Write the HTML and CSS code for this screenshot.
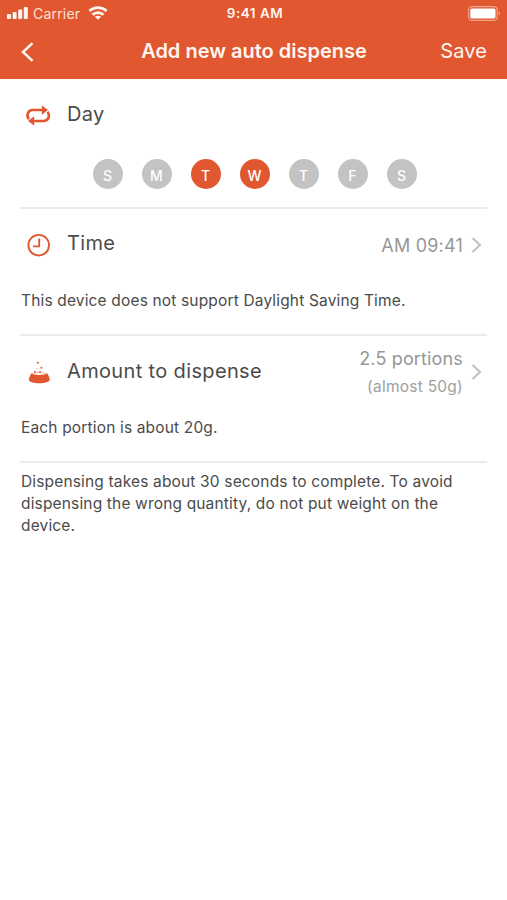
FILE: index.html
```html
<!DOCTYPE html>
<html lang="en">
<head>
<meta charset="utf-8">
<title>Add new auto dispense</title>
<link rel="stylesheet" href="styles.css">
</head>
<body>
<header class="header">
  <div class="status">
    <div class="status-left">
      <svg class="signal" width="22" height="14" viewBox="0 0 22 14"><g fill="currentColor"><rect x="0" y="8" width="4" height="5" rx="1"/><rect x="5.6" y="6" width="4" height="7" rx="1"/><rect x="11.2" y="3.6" width="4" height="9.4" rx="1"/><rect x="16.8" y="1" width="4" height="12" rx="1"/></g></svg>
      <span class="carrier">Carrier</span>
      <svg class="wifi" width="20" height="14" viewBox="0 0 20 14"><g fill="none" stroke="currentColor" stroke-width="2.7"><path d="M1.4 5C6.4.6 13.6.6 18.6 5"/><path d="M4.5 8.8c3.2-2.9 7.8-2.9 11 0"/></g><path fill="currentColor" d="M6.9 10.8c1.8-1.4 4.4-1.4 6.2 0L10 13.7z"/></svg>
    </div>
    <span class="clock">9:41 AM</span>
    <svg class="battery" width="33" height="16" viewBox="0 0 33 16"><rect x=".6" y=".6" width="28.6" height="13.8" rx="3.5" fill="none" stroke="#f0a68e" stroke-width="1.1"/><rect x="2.3" y="2.4" width="25.2" height="10.2" rx="1.7" fill="#fff"/><path d="M30.6 5.5c1.8.6 1.8 3.4 0 4z" fill="#f0a68e"/></svg>
  </div>
  <nav class="nav">
    <svg class="back" width="14" height="20" viewBox="0 0 14 20"><path d="M11.5 1.2 2 10l9.5 8.8" fill="none" stroke="currentColor" stroke-width="2.5"/></svg>
    <h1 class="title">Add new auto dispense</h1>
    <span class="save">Save</span>
  </nav>
</header>
<main class="content">
  <section class="section">
    <div class="row">
      <svg class="icon" width="26" height="26" viewBox="0 0 26 26"><g fill="none" stroke="currentColor" stroke-width="2.7"><path d="M3.9 17.2C1 13.4 2.8 8 7.8 8H18"/><path d="M22.5 9.8C25.4 13.6 23.6 19 18.6 19H8"/></g><path fill="currentColor" d="m16.8 3.4 6.2 4.6-6.2 4.8zM9.2 14.2v9.4L3 19z"/></svg>
      <h2 class="label">Day</h2>
    </div>
    <div class="days">
      <span class="day">S</span><span class="day">M</span><span class="day on">T</span><span class="day on">W</span><span class="day">T</span><span class="day">F</span><span class="day">S</span>
    </div>
  </section>
  <section class="section">
    <div class="row">
      <svg class="icon" width="26" height="26" viewBox="0 0 26 26"><g fill="none" stroke="currentColor"><circle cx="13.7" cy="13.2" r="10.3" stroke-width="1.9"/><path d="M14.2 6.5v7.9H8" stroke-width="1.9"/></g></svg>
      <h2 class="label">Time</h2>
      <span class="value time">AM 09:41</span>
      <svg class="chevron" width="12" height="16" viewBox="0 0 12 16"><path d="m1.5 1 7.5 7-7.5 7" fill="none" stroke="currentColor" stroke-width="2.2"/></svg>
    </div>
    <p class="note dst">This device does not support Daylight Saving Time.</p>
  </section>
  <section class="section">
    <div class="row">
      <svg class="icon" width="26" height="26" viewBox="0 0 26 26"><g fill="currentColor"><path d="M6.1 14.6c2.6 1.7 13.8 1.7 16.4 0 .9 2 2.2 4.6 2.2 5.8 0 5-20.9 5-20.9 0 0-1.2 1.4-3.8 2.3-5.8z"/><path opacity=".35" d="M6.1 14.6c2-2 14.4-2 16.4 0l-.8.6c-2.6-1.2-12.2-1.2-14.8 0z"/><circle cx="12.8" cy="3.8" r="1"/><circle cx="16.4" cy="8.8" r="1"/><circle cx="11.6" cy="9.6" r=".6" opacity=".5"/><circle cx="10" cy="13" r="1"/><circle cx="15" cy="13" r="1"/></g></svg>
      <h2 class="label">Amount to dispense</h2>
      <div class="amount"><span class="value portions">2.5 portions</span><span class="approx">(almost 50g)</span></div>
      <svg class="chevron" width="12" height="16" viewBox="0 0 12 16"><path d="m1.5 1 7.5 7-7.5 7" fill="none" stroke="currentColor" stroke-width="2.2"/></svg>
    </div>
    <p class="note portion">Each portion is about 20g.</p>
  </section>
  <p class="note info">Dispensing takes about 30 seconds to complete. To avoid dispensing the wrong quantity, do not put weight on the device.</p>
</main>
</body>
</html>
```
FILE: styles.css
```css
* { box-sizing: border-box; }
body {
  margin: 0;
  background: #fff;
  color: #4b4b4b;
  font-family: Inter, "Liberation Sans", sans-serif;
}
h1, h2, p { margin: 0; font-weight: 400; }
svg { display: block; flex: none; }
.header {
  height: 79px;
  background: #e15830;
  color: #fff5f0;
}
.status {
  display: grid;
  grid-template-columns: 1fr auto 1fr;
  align-items: center;
  height: 26px;
  padding: 0 6px 0 7px;
}
.status-left { display: flex; align-items: center; }
.carrier { margin-left: 4px; font-size: 14px; letter-spacing: 0.2px; width: 48px; white-space: nowrap; color: #ffe0d5; }
.wifi { margin-left: 7px; }
.clock { padding-left: 2px; font-size: 13.5px; font-weight: 600; letter-spacing: 0.5px; }
.battery { justify-self: end; margin-top: 2px; }
.nav {
  display: grid;
  grid-template-columns: 1fr auto 1fr;
  align-items: center;
  height: 50px;
  padding: 0 20px 0 21px;
}
.title { font-size: 20px; line-height: 24px; font-weight: 600; }
.save { justify-self: end; font-size: 20px; line-height: 24px; letter-spacing: 0.1px; }
.back { margin-top: 2px; }
.content { padding: 0 20px; }
.section { border-bottom: 2px solid #ececec; }
.section:nth-child(1) { height: 130px; }
.section:nth-child(2), .section:nth-child(3) { height: 127px; }
.row { display: flex; align-items: center; height: 72px; padding-left: 5px; }
.icon { color: #e15830; }
.label { flex: 1; margin: -3px 0 0 16px; font-size: 20px; line-height: 24px; letter-spacing: 0.35px; }
.section:nth-child(2) .label { margin-top: -4px; }
.value { font-size: 18px; line-height: 24px; color: #979797; white-space: nowrap; }
.time { letter-spacing: 0.2px; margin-top: 1px; }
.chevron { margin: 0 4px 0 8px; color: #c2c2c2; }
.amount { display: flex; flex-direction: column; align-items: flex-end; gap: 4px; padding-top: 2px; }
.approx { font-size: 15.5px; line-height: 24px; letter-spacing: 0.25px; color: #a0a0a0; }
.portions { letter-spacing: 0.15px; }
.days { display: flex; justify-content: center; gap: 19px; padding: 8px 0 0 2px; }
.day {
  width: 30px;
  height: 30px;
  padding-top: 2px;
  border-radius: 50%;
  background: #c3c3c3;
  color: #fff;
  font-size: 14px;
  font-weight: 500;
  line-height: 30px;
  text-align: center;
}
.day.on { background: #e15830; }
.note { padding-left: 1px; font-size: 15.5px; line-height: 22px; letter-spacing: 0.16px; }
.dst, .portion { padding-top: 9px; }
.info { padding-top: 8px; }
```
